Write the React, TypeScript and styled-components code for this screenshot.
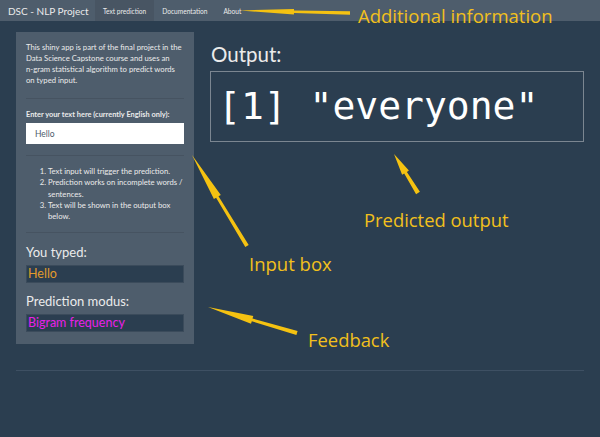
import React from 'react'
import styled, { createGlobalStyle } from 'styled-components'

const GlobalStyle = createGlobalStyle`
  html, body {
    margin: 0;
    padding: 0;
    background: #2b3e50;
  }
  body {
    font-family: Lato, 'Open Sans', sans-serif;
    color: #ebebeb;
    width: 600px;
    height: 437px;
    overflow: hidden;
  }
  * {
    box-sizing: border-box;
  }
`

const Page = styled.div`
  position: relative;
  width: 600px;
  height: 437px;
  background: #2b3e50;
`

const Navbar = styled.nav`
  display: flex;
  align-items: stretch;
  height: 21px;
  background: #4e5d6c;
  padding-left: 8px;
`

const Brand = styled.div`
  display: flex;
  align-items: center;
  font-size: 10px;
  color: #ebebeb;
  width: 87px;
  white-space: nowrap;
`

const Tab = styled.div<{ $active?: boolean }>`
  display: flex;
  align-items: center;
  padding: 0 8px;
  font-size: 6.6px;
  color: #ebebeb;
  white-space: nowrap;
  background: ${(p) => (p.$active ? '#485563' : 'transparent')};
`

const Container = styled.div`
  padding: 11px 16px 0;
`

const Row = styled.div`
  display: flex;
  align-items: flex-start;
  gap: 16px;
`

const Sidebar = styled.aside`
  width: 178px;
  flex: none;
  background: #4e5d6c;
  padding: 10px 10px 12px;
`

const Intro = styled.p`
  margin: 0;
  font-size: 7.7px;
  line-height: 11px;
  white-space: nowrap;
`

const Divider = styled.hr<{ $top: number; $bottom: number }>`
  border: 0;
  border-top: 1px solid rgba(0, 0, 0, 0.1);
  margin: ${(p) => p.$top}px 0 ${(p) => p.$bottom}px;
`

const Label = styled.label`
  display: block;
  font-size: 7.4px;
  font-weight: bold;
  line-height: 8px;
  margin-bottom: 4px;
  white-space: nowrap;
`

const TextInput = styled.input`
  display: block;
  width: 158px;
  height: 21px;
  border: 0;
  padding: 0 9px;
  font-family: Lato, sans-serif;
  font-size: 8.5px;
  color: #4e5d6c;
  background: #ffffff;
  outline: none;
`

const Steps = styled.ol`
  margin: 0;
  padding-left: 22px;
  font-size: 7.7px;
  line-height: 11.3px;
  white-space: nowrap;
`

const SubHeading = styled.h4`
  margin: 0 0 5px;
  font-size: 13px;
  font-weight: normal;
  line-height: 15px;
`

const Verbatim = styled.div<{ $color: string; $gap?: number }>`
  height: 18px;
  background: #2b3e50;
  border: 1px solid #3b4b5b;
  color: ${(p) => p.$color};
  font-size: 12.5px;
  line-height: 16px;
  padding-left: 1px;
  margin-bottom: ${(p) => p.$gap ?? 0}px;
  white-space: nowrap;
`

const Main = styled.main`
  flex: 1;
  padding-top: 12px;
`

const OutputTitle = styled.h3`
  margin: 0 0 7px 1px;
  font-size: 20.5px;
  font-weight: normal;
  line-height: 20px;
`

const OutputBox = styled.pre`
  margin: 0;
  height: 71px;
  border: 1px solid #7b8691;
  padding: 9px 0 0 7px;
  font-family: 'DejaVu Sans Mono', monospace;
  font-size: 38px;
  line-height: 50px;
  color: #ffffff;
`

const Rule = styled.hr`
  border: 0;
  border-top: 1px solid #3e5063;
  margin: 26px 16px 0;
`

const Overlay = styled.svg`
  position: absolute;
  left: 0;
  top: 0;
  pointer-events: none;
`

const Note = styled.div<{ $x: number; $y: number; $size: number }>`
  position: absolute;
  left: ${(p) => p.$x}px;
  top: ${(p) => p.$y}px;
  font-family: 'Open Sans', 'Noto Sans', sans-serif;
  font-size: ${(p) => p.$size}px;
  line-height: 1;
  color: #f2c01c;
  white-space: nowrap;
`

type Arrow = { tip: [number, number]; tail: [number, number]; head: number; headW: number; shaft: number }

const arrows: Arrow[] = [
  { tip: [240, 10.5], tail: [350, 13], head: 54, headW: 5.5, shaft: 3.6 },
  { tip: [192, 155], tail: [247, 246], head: 49, headW: 8, shaft: 4 },
  { tip: [394, 154], tail: [418, 193], head: 22, headW: 8, shaft: 4.5 },
  { tip: [208, 307], tail: [297, 333], head: 46, headW: 8, shaft: 4 },
]

// tapered shaft + long narrow head, like the screenshot annotations
const arrowPoints = ({ tip, tail, head, headW, shaft }: Arrow) => {
  const dx = tip[0] - tail[0]
  const dy = tip[1] - tail[1]
  const len = Math.hypot(dx, dy)
  const ux = dx / len
  const uy = dy / len
  const nx = -uy
  const ny = ux
  const bx = tip[0] - ux * head
  const by = tip[1] - uy * head
  const pts = [
    [tail[0] + (nx * shaft) / 2, tail[1] + (ny * shaft) / 2],
    [bx + (nx * shaft * 0.7) / 2, by + (ny * shaft * 0.7) / 2],
    [bx + (nx * headW) / 2, by + (ny * headW) / 2],
    tip,
    [bx - (nx * headW) / 2, by - (ny * headW) / 2],
    [bx - (nx * shaft * 0.7) / 2, by - (ny * shaft * 0.7) / 2],
    [tail[0] - (nx * shaft) / 2, tail[1] - (ny * shaft) / 2],
  ]
  return pts.map((p) => `${p[0].toFixed(1)},${p[1].toFixed(1)}`).join(' ')
}

const App: React.FC = () => {
  return (
    <Page>
      <GlobalStyle />
      <Navbar>
        <Brand>DSC - NLP Project</Brand>
        <Tab $active>Text prediction</Tab>
        <Tab>Documentation</Tab>
        <Tab>About</Tab>
      </Navbar>

      <Container>
        <Row>
          <Sidebar>
            <Intro>
              This shiny app is part of the final project in the
              <br />
              Data Science Capstone course and uses an
              <br />
              n-gram statistical algorithm to predict words
              <br />
              on typed input.
            </Intro>
            <Divider $top={12} $bottom={12} />
            <Label htmlFor="text">Enter your text here (currently English only):</Label>
            <TextInput id="text" defaultValue="Hello" />
            <Divider $top={11} $bottom={10} />
            <Steps>
              <li>Text input will trigger the prediction.</li>
              <li>
                Prediction works on incomplete words /
                <br />
                sentences.
              </li>
              <li>
                Text will be shown in the output box
                <br />
                below.
              </li>
            </Steps>
            <Divider $top={10} $bottom={12} />
            <SubHeading>You typed:</SubHeading>
            <Verbatim $color="#e39b2b" $gap={11}>
              Hello
            </Verbatim>
            <SubHeading>Prediction modus:</SubHeading>
            <Verbatim $color="#ea1ee8">Bigram frequency</Verbatim>
          </Sidebar>

          <Main>
            <OutputTitle>Output:</OutputTitle>
            <OutputBox>[1] "everyone"</OutputBox>
          </Main>
        </Row>
      </Container>
      <Rule />

      <Overlay width={600} height={437} viewBox="0 0 600 437">
        {arrows.map((a, i) => (
          <polygon key={i} points={arrowPoints(a)} fill="#f5c211" />
        ))}
      </Overlay>
      <Note $x={358} $y={7} $size={18.5}>
        Additional information
      </Note>
      <Note $x={364} $y={211} $size={18.4}>
        Predicted output
      </Note>
      <Note $x={249} $y={255} $size={18.5}>
        Input box
      </Note>
      <Note $x={308} $y={331} $size={18.4}>
        Feedback
      </Note>
    </Page>
  )
}

export default App
